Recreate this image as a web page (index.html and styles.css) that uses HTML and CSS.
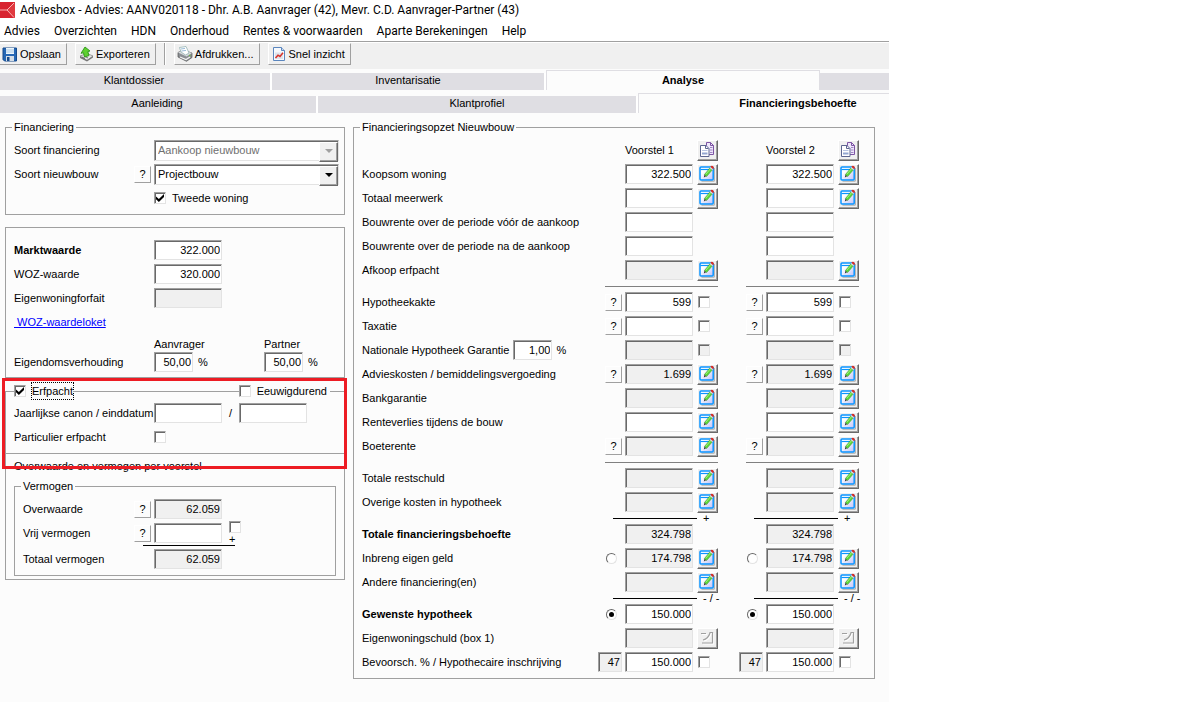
FILE: index.html
```html
<!DOCTYPE html>
<html lang="nl">

<head>
    <meta charset="UTF-8">
    <meta name="viewport" content="width=device-width, initial-scale=1.0">
    <title>Adviesbox - Financieringsbehoefte</title>
    <link rel="stylesheet" href="styles.css">
</head>

<body>
    <!-- Shared icons -->
    <svg class="sprite" aria-hidden="true">
        <defs>
            <linearGradient id="paper" x1="0" y1="0" x2="1" y2="1">
                <stop offset="0.3" stop-color="#fff" />
                <stop offset="1" stop-color="#c0c0f8" />
            </linearGradient>
        </defs>
        <symbol id="icon-edit" viewBox="0 0 17 17">
            <path d="M2.5 16.2h12.8V3" fill="none" stroke="#a8a8a8" stroke-width="1" />
            <rect x="1" y="2" width="13.2" height="13" rx="1" fill="url(#paper)" stroke="#0a94ff" stroke-width="1.5" />
            <path d="M1.5 4.500h9" stroke="#0a94ff" stroke-width="1.2" />
            <path d="M4.8 12.4l.8-3 1.8 1.5z" fill="#333" />
            <path d="M5.400 9.600l5.400-6.600 2.400 2-5.600 6.600z" fill="#5cd83a" stroke="#3b8f2b" stroke-width="0.5" />
            <path d="M6.8 9.2l4.800-5.500" stroke="#b4f58c" stroke-width="0.8" />
            <path d="M10.800 3l.9-1 2.400 2-.9 1z" fill="#ddd" />
            <path d="M11.400 1.800q1.200-1.800 2.700-.6 1.600 1.300.1 3z" fill="#e02b1d" />
        </symbol>
        <symbol id="icon-edit-off" viewBox="0 0 17 17">
            <path d="M2 4.500h5M10.500 3.500h3v10.500H3M4 11q5-1 7-7" fill="none" stroke="#fff" stroke-width="1.200" transform="translate(1 1)" />
            <path d="M2 4.500h5M10.500 3.500h3v10.500H3M4 11q5-1 7-7" fill="none" stroke="#a0a0a0" stroke-width="1.200" />
        </symbol>
        <symbol id="icon-copy" viewBox="0 0 17 17">
            <path d="M7.500 1.500h4l3 3v9h-7z" fill="#eee8fb" stroke="#7d54a4" />
            <path d="M11.500 1.500v3h3" fill="none" stroke="#7d54a4" />
            <path d="M11 6.500h2.500M11 9h2.500M11 11.500h2.500" stroke="#a183c4" />
            <path d="M1.500 4.500h5.500l3 3v8h-8.500z" fill="#fff" stroke="#5c6690" />
            <path d="M6.500 4.500v3h3" fill="none" stroke="#5c6690" />
            <path d="M3 9.500h5.500" stroke="#b9c6e2" />
            <path d="M3 12.500h5.500" stroke="#93a6d0" stroke-width="2" />
        </symbol>
    </svg>

    <div class="app">
        <header class="title-bar">
            <svg class="logo" viewBox="0 0 15 16" aria-hidden="true">
                <rect width="15" height="16" fill="#d8232f" />
                <path d="M7 8L15 0v16z" fill="#e0393f" />
                <path d="M0 8h7L14 1M7 8l7 7.500" fill="none" stroke="#f9b4b4" stroke-width="1" />
            </svg>
            <span>Adviesbox - Advies: AANV020118 - Dhr. A.B. Aanvrager (42), Mevr. C.D. Aanvrager-Partner (43)</span>
        </header>

        <nav class="menu">
            <a href="#">Advies</a>
            <a href="#">Overzichten</a>
            <a href="#">HDN</a>
            <a href="#">Onderhoud</a>
            <a href="#">Rentes &amp; voorwaarden</a>
            <a href="#">Aparte Berekeningen</a>
            <a href="#">Help</a>
        </nav>

        <div class="toolbar">
            <button type="button" class="tool first">
                <svg viewBox="0 0 16 16" aria-hidden="true">
                    <path d="M1 2h13.500v13H2.500L1 13.500z" fill="#2567b5" stroke="#164b8c" />
                    <rect x="4" y="2" width="8" height="6" fill="#eef6fc" />
                    <path d="M4 4h8M4 6h8" stroke="#a8c8e4" />
                    <rect x="4" y="10" width="8" height="5" fill="#d4dde6" />
                    <rect x="5" y="11" width="2.500" height="4" fill="#164b8c" />
                </svg>
                Opslaan
            </button>
            <button type="button" class="tool">
                <svg viewBox="0 0 16 16" aria-hidden="true">
                    <path d="M2 10l7-2.500 6 2.500-6 4.500z" fill="#e8e8e8" stroke="#888" stroke-width="0.800" />
                    <path d="M2 10v2l7 3.500 6-4V10l-6 4z" fill="#777" />
                    <path d="M4 11l3 1.500M6 10l4 2" stroke="#555" stroke-width="0.800" />
                    <path d="M7 1l5 4-2.200.6 1.200 4-4.500 1.400-1-4.200-2.500.5z" fill="#5ed02f" stroke="#2d9418" stroke-width="0.900" />
                </svg>
                Exporteren
            </button>
            <span class="divider"></span>
            <button type="button" class="tool">
                <svg viewBox="0 0 16 16" aria-hidden="true">
                    <path d="M1 6.500l5-2.500 9 3v4.500l-5.500 3.800L1 11z" fill="#8b8f94" stroke="#555" stroke-width="0.700" />
                    <path d="M1 6.500l5-2.500 9 3-5.500 3.500z" fill="#d9dcdf" />
                    <path d="M4 6L2.500 1.500l6.500-1L12 7l-3.500 2z" fill="#fff" stroke="#8aa" stroke-width="0.700" />
                    <path d="M4 3l4-.6M4.500 5l4.500-.6" stroke="#8fb4d4" stroke-width="0.900" />
                    <path d="M3 11l6 2.500 4-2.500" fill="none" stroke="#f4f4f4" stroke-width="1.200" />
                    <circle cx="12.800" cy="9.500" r="0.800" fill="#66c437" />
                </svg>
                Afdrukken...
            </button>
            <button type="button" class="tool">
                <svg viewBox="0 0 16 16" aria-hidden="true">
                    <path d="M2.500 1.500h8l3 3v10h-11z" fill="#f6f9fd" stroke="#5b86be" />
                    <path d="M10.500 1.500v3h3" fill="#c9daef" stroke="#5b86be" />
                    <rect x="4" y="6.500" width="8" height="6.500" fill="#dde3ec" />
                    <path d="M4.500 12l2.500-2.800 2 1.300 3-3.800" fill="none" stroke="#d8332a" stroke-width="1.500" />
                </svg>
                Snel inzicht
            </button>
        </div>

        <div class="tabs tabs-main" role="tablist">
            <button type="button" role="tab" class="tab">Klantdossier</button>
            <button type="button" role="tab" class="tab">Inventarisatie</button>
            <button type="button" role="tab" class="tab active" aria-selected="true">Analyse</button>
            <span class="tab"></span>
        </div>
        <div class="tabs tabs-sub" role="tablist">
            <button type="button" role="tab" class="tab">Aanleiding</button>
            <button type="button" role="tab" class="tab">Klantprofiel</button>
            <button type="button" role="tab" class="tab active" aria-selected="true">Financieringsbehoefte</button>
        </div>

        <main class="content">
            <div class="left">
                <fieldset class="group financing">
                    <legend>Financiering</legend>
                    <div class="row">
                        <label class="name" for="soortFinanciering">Soort financiering</label>
                        <span class="lead"></span>
                        <span class="dropdown disabled">
                            <select id="soortFinanciering" disabled>
                                <option>Aankoop nieuwbouw</option>
                            </select>
                        </span>
                    </div>
                    <div class="row">
                        <label class="name" for="soortNieuwbouw">Soort nieuwbouw</label>
                        <span class="lead"><button type="button" class="help">?</button></span>
                        <span class="dropdown">
                            <select id="soortNieuwbouw">
                                <option>Projectbouw</option>
                            </select>
                        </span>
                    </div>
                    <div class="row">
                        <span class="name"></span>
                        <span class="lead"></span>
                        <label class="tick"><input type="checkbox" checked> Tweede woning</label>
                    </div>
                </fieldset>

                <section class="box value-box">
                    <div class="row">
                        <label class="name strong" for="marktwaarde">Marktwaarde</label>
                        <span class="lead"></span>
                        <input type="text" class="field" id="marktwaarde" value="322.000">
                    </div>
                    <div class="row">
                        <label class="name" for="woz">WOZ-waarde</label>
                        <span class="lead"></span>
                        <input type="text" class="field" id="woz" value="320.000">
                    </div>
                    <div class="row">
                        <label class="name" for="forfait">Eigenwoningforfait</label>
                        <span class="lead"></span>
                        <input type="text" class="field" id="forfait" readonly>
                    </div>
                    <div class="row">
                        <a class="link" href="#">&nbsp;WOZ-waardeloket</a>
                    </div>
                    <div class="row ownership">
                        <span class="name">Eigendomsverhouding</span>
                        <span class="lead"></span>
                        <div class="share">
                            <label for="aanvrager">Aanvrager</label>
                            <span><input type="text" class="field short" id="aanvrager" value="50,00"> %</span>
                        </div>
                        <div class="share">
                            <label for="partner">Partner</label>
                            <span><input type="text" class="field short" id="partner" value="50,00"> %</span>
                        </div>
                    </div>
                </section>

                <fieldset class="group erfpacht">
                    <legend>
                        <label class="tick"><input type="checkbox" checked> <span class="focused">Erfpacht</span></label>
                        <span class="rule"></span>
                        <label class="tick"><input type="checkbox"> Eeuwigdurend</label>
                        <span class="rule end"></span>
                    </legend>
                    <div class="row">
                        <label class="name wide" for="canon">Jaarlijkse canon / einddatum</label>
                        <input type="text" class="field" id="canon">
                        <span class="slash">/</span>
                        <input type="text" class="field" aria-label="Einddatum">
                    </div>
                    <div class="row">
                        <label class="name wide" for="particulier">Particulier erfpacht</label>
                        <input type="checkbox" id="particulier">
                    </div>
                </fieldset>

                <section class="box assets-box">
                    <p class="caption">Overwaarde en vermogen per voorstel</p>
                    <fieldset class="group assets">
                        <legend>Vermogen</legend>
                        <div class="row">
                            <label class="name" for="overwaarde">Overwaarde</label>
                            <span class="lead"><button type="button" class="help">?</button></span>
                            <input type="text" class="field" id="overwaarde" value="62.059" readonly>
                        </div>
                        <div class="row">
                            <label class="name" for="vrij">Vrij vermogen</label>
                            <span class="lead"><button type="button" class="help">?</button></span>
                            <input type="text" class="field" id="vrij">
                            <span class="plus"><input type="checkbox" aria-label="Vrij vermogen meenemen">+</span>
                        </div>
                        <div class="sum-line"></div>
                        <div class="row">
                            <label class="name" for="totaal">Totaal vermogen</label>
                            <span class="lead"></span>
                            <input type="text" class="field" id="totaal" value="62.059" readonly>
                        </div>
                    </fieldset>
                </section>
            </div>

            <fieldset class="group setup">
                <legend>Financieringsopzet Nieuwbouw</legend>
                <div id="setupRows"></div>
            </fieldset>
        </main>
    </div>

    <script src="script.js"></script>
</body>

</html>
```

FILE: styles.css
```css
* {
    box-sizing: border-box;
}

body {
    margin: 0;
    background: #fff;
    color: #000;
    font: 11px/16px "Liberation Sans", Arial, sans-serif;
}

button,
input,
select {
    font: inherit;
    color: inherit;
    margin: 0;
    padding: 0;
    border-radius: 0;
}

.sprite {
    position: absolute;
    width: 0;
    height: 0;
}

.app {
    max-width: 889px;
    min-height: 100vh;
    background: #fcfcfc;
    overflow: hidden;
}

/* Title and menu */
.title-bar,
.menu {
    display: flex;
    align-items: center;
    background: #fff;
    font-family: Roboto, "Open Sans", sans-serif;
    font-size: 12px;
    white-space: nowrap;
}

.title-bar {
    height: 20px;
    gap: 5px;
}

.logo {
    width: 15px;
    height: 16px;
}

.menu {
    height: 21px;
    padding: 0 4px;
    gap: 14px;
}

.menu a {
    color: #000;
    text-decoration: none;
}

/* Toolbar */
.toolbar {
    display: flex;
    align-items: flex-start;
    gap: 8px;
    height: 28px;
    padding-top: 1px;
    background: #f0f0f0;
    border-top: 1px solid #a0a0a0;
    box-shadow: inset 0 1px #fff;
}

.tool {
    display: flex;
    align-items: center;
    gap: 2px;
    height: 22px;
    padding: 0 5px 0 2px;
    background: #f0f0f0;
    border: 1px solid;
    border-color: #fff #a0a0a0 #a0a0a0 #fff;
}

.tool.first {
    border-left: 0;
}

.tool svg {
    width: 16px;
    height: 16px;
}

.divider {
    width: 2px;
    height: 22px;
    border-left: 1px solid #a0a0a0;
    border-right: 1px solid #fff;
}

/* Tabs */
.tabs {
    display: flex;
    align-items: flex-end;
    height: 23px;
    margin-left: -2px;
    padding-bottom: 3px;
}

.tabs-main {
    margin-top: 1px;
}

.tab {
    flex: 0 0 auto;
    height: 17px;
    padding-bottom: 2px;
    background: #dfdee3;
    border: 0;
    border-right: 2px solid #fff;
    line-height: 15px;
    text-align: center;
}

.tabs-main .tab {
    width: 274px;
}

.tabs-sub .tab {
    width: 320px;
}

.tab.active {
    height: 20px;
    padding-bottom: 0;
    background: #fcfcfc;
    border: 1px solid #dfdee3;
    border-bottom: 0;
    font-weight: bold;
}

/* Sunken and raised controls */
.field,
.dropdown,
input[type="checkbox"] {
    background: #fff;
    border: 1px solid;
    border-color: #a0a0a0 #e3e3e3 #e3e3e3 #a0a0a0;
    box-shadow: inset 1px 1px #696969;
}

.field {
    flex: none;
    width: 68px;
    height: 20px;
    padding: 0 1px 0 2px;
    line-height: 16px;
    text-align: right;
    outline: 0;
}

.field[readonly] {
    background: #f0f0f0;
}

.field.short {
    width: 39px;
}

.field.percent {
    width: 24px;
}

.help {
    width: 17px;
    height: 17px;
    background: #fcfcfc;
    border: 1px solid;
    border-color: #fff #a0a0a0 #a0a0a0 #fff;
    line-height: 15px;
}

input[type="checkbox"] {
    appearance: none;
    flex: none;
    width: 12px;
    height: 12px;
}

input[type="checkbox"]:disabled {
    background: #f0f0f0;
}

input[type="checkbox"]:checked::before {
    content: "";
    display: block;
    width: 8px;
    height: 8px;
    margin: 1px;
    background: #000;
    clip-path: polygon(0 30%, 36% 62%, 100% 0, 100% 38%, 36% 100%, 0 66%);
}

input[type="radio"] {
    appearance: none;
    width: 11px;
    height: 11px;
    background: #fff;
    border: 1px solid;
    border-color: #696969 #e3e3e3 #e3e3e3 #696969;
    border-radius: 50%;
}

input[type="radio"]:checked::before {
    content: "";
    display: block;
    width: 5px;
    height: 5px;
    margin: 2px;
    background: #000;
    border-radius: 50%;
}

.dropdown {
    position: relative;
    flex: 1;
    height: 21px;
}

.dropdown select {
    appearance: none;
    width: 100%;
    height: 19px;
    padding-left: 3px;
    background: transparent;
    border: 0;
    outline: 0;
    opacity: 1;
}

/* Arrow button drawn over the right end of the select */
.dropdown::before {
    content: "";
    position: absolute;
    top: 1px;
    right: 0;
    width: 17px;
    height: 18px;
    background: #f0f0f0;
    border: 1px solid;
    border-color: #fff #696969 #696969 #fff;
    box-shadow: inset -1px -1px #a0a0a0;
    pointer-events: none;
}

.dropdown::after {
    content: "";
    position: absolute;
    top: 8px;
    right: 5px;
    border: 4px solid transparent;
    border-top-color: #000;
    border-bottom: 0;
    pointer-events: none;
}

.dropdown.disabled {
    color: #707070;
}

.dropdown.disabled::after {
    border-top-color: #a0a0a0;
}

.tick {
    display: flex;
    align-items: center;
    gap: 6px;
}

/* Layout */
.content {
    display: flex;
    align-items: flex-start;
    gap: 8px;
    padding: 3px 14px 0 5px;
}

.left {
    flex: 0 0 340px;
    min-width: 0;
}

.group,
.box {
    min-width: 0;
    margin: 0;
    padding: 0 5px 0 8px;
    border: 1px solid #a0a0a0;
}

.group legend {
    padding: 0 2px;
    margin-left: -2px;
}

.row {
    display: flex;
    align-items: center;
    height: 24px;
}

.name {
    flex: none;
    width: 115px;
    white-space: nowrap;
}

.name.wide {
    width: 140px;
}

.strong {
    font-weight: bold;
}

.lead {
    display: flex;
    flex: none;
    justify-content: flex-end;
    width: 25px;
    padding-right: 3px;
}

.financing {
    padding-top: 3px;
    padding-bottom: 4px;
}

.value-box {
    margin-top: 12px;
    padding-top: 10px;
    padding-bottom: 5px;
}

.link {
    color: #0000ff;
}

.row.ownership {
    height: 38px;
    align-items: flex-end;
}

.ownership .name {
    line-height: 20px;
}

.share {
    flex: 0 0 110px;
}

.share:last-child {
    flex: 1;
}

.share label {
    display: block;
}

.share span {
    display: flex;
    align-items: center;
    gap: 5px;
}

.erfpacht {
    position: relative;
    margin-top: 5px;
    padding-top: 2px;
    padding-bottom: 4px;
}

.erfpacht legend {
    display: flex;
    align-items: center;
    width: 100%;
    height: 16px;
    padding: 0;
    margin: 0;
}

.rule {
    flex: 1;
    height: 1px;
    background: #a0a0a0;
}

.rule.end {
    flex: 0 0 9px;
    margin-left: 3px;
}

.focused {
    outline: 1px dotted #000;
}

.slash {
    width: 17px;
    text-align: center;
}

/* Red marker around the ground lease part */
.erfpacht::after {
    content: "";
    position: absolute;
    inset: -21px -3px -16px -4px;
    border: 3px solid #ed1c24;
    pointer-events: none;
}

.assets-box {
    padding-bottom: 3px;
    padding-right: 8px;
    border-top: 0;
}

.caption {
    margin: 0;
    padding: 4px 0;
}

.assets {
    padding-top: 3px;
    padding-bottom: 4px;
}

.assets .name {
    width: 106px;
}

.plus {
    display: flex;
    flex-direction: column;
    margin-left: 7px;
    line-height: 12px;
}

.sum-line {
    width: 92px;
    height: 2px;
    margin-left: 120px;
    border-top: 1px solid #000;
}

/* Right panel */
.setup {
    flex: 1;
    padding: 3px 15px 4px 8px;
}

.line {
    display: flex;
    align-items: center;
    gap: 20px;
    height: 24px;
}

.line .name {
    display: flex;
    align-items: center;
    flex: 1;
    gap: 4px;
}

.proposal {
    display: flex;
    align-items: center;
    width: 121px;
}

.proposal .lead {
    width: 28px;
}

.proposal .lead input[type="radio"] {
    margin-right: 5px;
}

.proposal .title {
    width: 68px;
}

.action {
    display: flex;
    width: 25px;
    padding-left: 4px;
}

.icon-button {
    display: flex;
    align-items: flex-start;
    width: 21px;
    height: 21px;
    padding-left: 1px;
    background: #f0f0f0;
    border: 1px solid;
    border-color: #fff #696969 #696969 #fff;
    box-shadow: inset -1px -1px #a0a0a0;
}

.icon-button svg {
    width: 17px;
    height: 17px;
}

.action input {
    margin-left: 1px;
}

.split {
    display: flex;
    justify-content: flex-end;
    gap: 20px;
    height: 8px;
}

.split .proposal::before {
    content: "";
    flex: 1;
    height: 1px;
    margin-left: 8px;
    background: #808080;
}

.split.total .proposal::before {
    flex: 0 0 84px;
    margin-left: 16px;
    background: #000;
}

.sign {
    flex: 1;
    padding-left: 6px;
    line-height: 8px;
    white-space: nowrap;
}
```

FILE: script.js
```js
// Rows of the financing setup, drawn once for each proposal
// lead: help | radio | percent, action: edit | off | check | checkOff | copy
const rows = [
    { label: '', title: true, action: 'copy' },
    { label: 'Koopsom woning', value: '322.500', action: 'edit' },
    { label: 'Totaal meerwerk', action: 'edit' },
    { label: 'Bouwrente over de periode vóór de aankoop' },
    { label: 'Bouwrente over de periode na de aankoop' },
    { label: 'Afkoop erfpacht', readonly: true, action: 'edit' },
    { split: true },
    { label: 'Hypotheekakte', lead: 'help', value: '599', action: 'check' },
    { label: 'Taxatie', lead: 'help', action: 'check' },
    { label: 'Nationale Hypotheek Garantie', rate: '1,00', readonly: true, action: 'checkOff' },
    { label: 'Advieskosten / bemiddelingsvergoeding', lead: 'help', value: '1.699', readonly: true, action: 'edit' },
    { label: 'Bankgarantie', readonly: true, action: 'edit' },
    { label: 'Renteverlies tijdens de bouw', action: 'edit' },
    { label: 'Boeterente', lead: 'help', readonly: true, action: 'edit' },
    { split: true },
    { label: 'Totale restschuld', readonly: true, action: 'edit' },
    { label: 'Overige kosten in hypotheek', readonly: true, action: 'edit' },
    { split: true, sign: '+' },
    { label: 'Totale financieringsbehoefte', strong: true, value: '324.798', readonly: true },
    { label: 'Inbreng eigen geld', lead: 'radio', value: '174.798', readonly: true, action: 'edit' },
    { label: 'Andere financiering(en)', readonly: true, action: 'edit' },
    { split: true, sign: '- / -' },
    { label: 'Gewenste hypotheek', strong: true, lead: 'radio', checked: true, value: '150.000' },
    { label: 'Eigenwoningschuld (box 1)', readonly: true, action: 'off' },
    { label: 'Bevoorsch. % / Hypothecaire inschrijving', lead: 'percent', value: '150.000', action: 'check' }
];

function iconButton(icon, name, disabled) {
    return `<button type="button" class="icon-button" aria-label="${name}" ${disabled ? 'disabled' : ''}>
        <svg aria-hidden="true"><use href="#${icon}"></use></svg></button>`;
}

function createLead(row, nr) {
    if (row.lead === 'help') return '<button type="button" class="help">?</button>';
    if (row.lead === 'radio') return `<input type="radio" name="doel${nr}" aria-label="${row.label}" ${row.checked ? 'checked' : ''}>`;
    if (row.lead === 'percent') return '<input type="text" class="field percent" value="47" aria-label="Percentage" readonly>';
    return '';
}

function createAction(row) {
    if (row.action === 'copy') return iconButton('icon-copy', 'Kopiëren');
    if (row.action === 'edit') return iconButton('icon-edit', 'Bewerken');
    if (row.action === 'off') return iconButton('icon-edit-off', 'Bewerken', true);
    if (row.action === 'check') return `<input type="checkbox" aria-label="${row.label}">`;
    if (row.action === 'checkOff') return `<input type="checkbox" aria-label="${row.label}" disabled>`;
    return '';
}

function createProposal(row, index, nr) {
    const field = row.title
        ? `<span class="title">Voorstel ${nr}</span>`
        : `<input type="text" class="field" id="veld${index}-${nr}" aria-label="${row.label}, voorstel ${nr}"
            value="${row.value || ''}" ${row.readonly ? 'readonly' : ''}>`;
    return `
        <div class="proposal">
            <span class="lead">${createLead(row, nr)}</span>
            ${field}
            <span class="action">${createAction(row)}</span>
        </div>`;
}

function createRow(row, index) {
    if (row.split) {
        const part = `<div class="proposal">${row.sign ? `<span class="sign">${row.sign}</span>` : ''}</div>`;
        return `<div class="split ${row.sign ? 'total' : ''}">${part}${part}</div>`;
    }
    const rate = row.rate ? `<input type="text" class="field short" value="${row.rate}" aria-label="Percentage garantie"> %` : '';
    return `
        <div class="line">
            <div class="name ${row.strong ? 'strong' : ''}"><label for="veld${index}-1">${row.label}</label>${rate}</div>
            ${createProposal(row, index, 1)}
            ${createProposal(row, index, 2)}
        </div>`;
}

document.getElementById('setupRows').innerHTML = rows.map(createRow).join('');
```
